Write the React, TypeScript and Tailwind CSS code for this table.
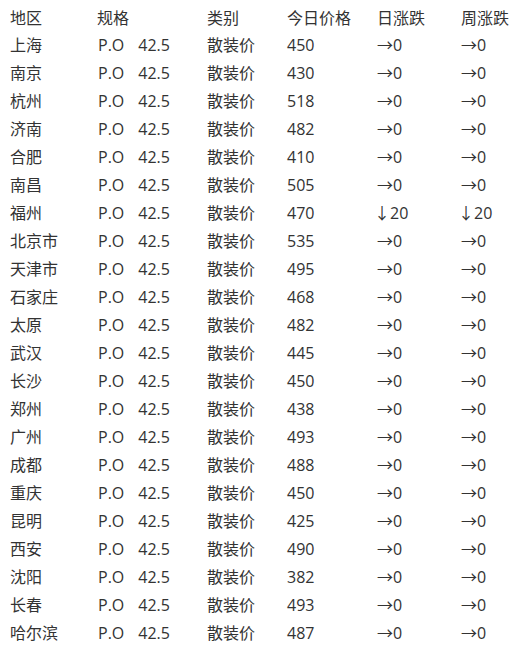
const rows: [string, number, string, string][] = [
  ["上海", 450, "→", "→"],
  ["南京", 430, "→", "→"],
  ["杭州", 518, "→", "→"],
  ["济南", 482, "→", "→"],
  ["合肥", 410, "→", "→"],
  ["南昌", 505, "→", "→"],
  ["福州", 470, "↓", "↓"],
  ["北京市", 535, "→", "→"],
  ["天津市", 495, "→", "→"],
  ["石家庄", 468, "→", "→"],
  ["太原", 482, "→", "→"],
  ["武汉", 445, "→", "→"],
  ["长沙", 450, "→", "→"],
  ["郑州", 438, "→", "→"],
  ["广州", 493, "→", "→"],
  ["成都", 488, "→", "→"],
  ["重庆", 450, "→", "→"],
  ["昆明", 425, "→", "→"],
  ["西安", 490, "→", "→"],
  ["沈阳", 382, "→", "→"],
  ["长春", 493, "→", "→"],
  ["哈尔滨", 487, "→", "→"],
];

const grid = "grid grid-cols-[87px_110px_80px_90px_84px_1fr] items-center pl-[10px]";

function Change({ arrow }: { arrow: string }) {
  if (arrow === "↓") {
    return (
      <div className="flex items-baseline">
        <span className="-ml-[3px]">↓</span>
        <span>20</span>
      </div>
    );
  }
  return <div>→0</div>;
}

export default function App() {
  return (
    <div className="w-[526px] h-[654px] bg-white text-[#333] text-[16px] leading-none pt-[4px] font-['Open_Sans','Noto_Sans_CJK_SC',sans-serif]">
      <div className={`${grid} h-[27px]`}>
        <div>地区</div>
        <div>规格</div>
        <div>类别</div>
        <div>今日价格</div>
        <div>日涨跌</div>
        <div>周涨跌</div>
      </div>
      {rows.map(([city, price, day, week]) => (
        <div key={city} className={`${grid} h-[28px]`}>
          <div>{city}</div>
          <div className="flex">
            <span className="pl-px">P.O</span>
            <span className="ml-[14px]">42.5</span>
          </div>
          <div>散装价</div>
          <div>{price}</div>
          <Change arrow={day} />
          <Change arrow={week} />
        </div>
      ))}
    </div>
  );
}
